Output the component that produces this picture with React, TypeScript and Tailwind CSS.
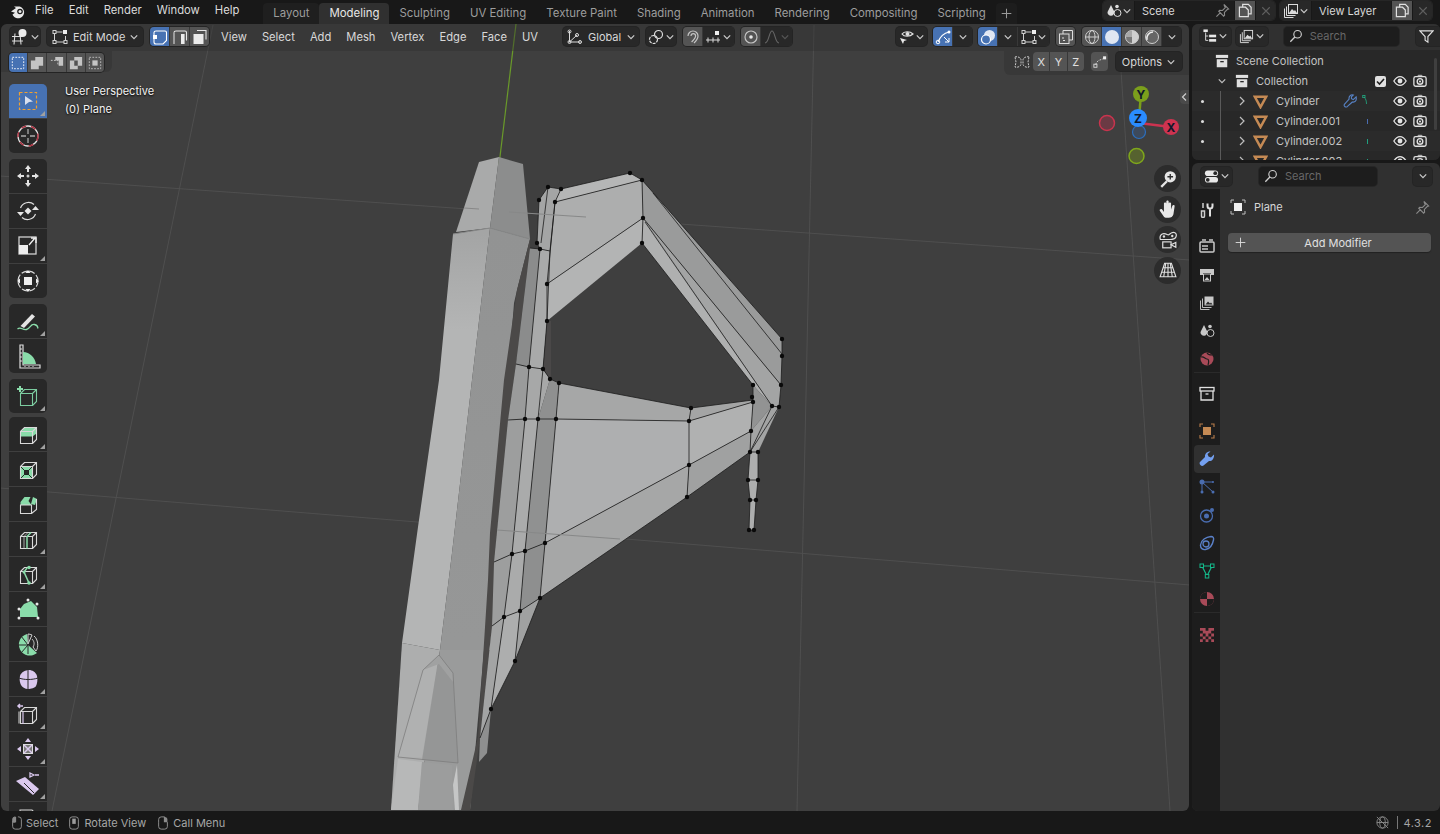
import type { ReactNode } from "react";

const S = "#d8d8d8";
const G = "#8adcaa";
const P = "#dac8ee";

const Chev = ({ c = "#c8c8c8" }: { c?: string }) => (
  <svg width="10" height="10" viewBox="0 0 10 10" className="shrink-0">
    <path d="M1.800 3.400 5 6.600l3.200-3.200" fill="none" stroke={c} strokeWidth="1.300" />
  </svg>
);

const Ico = ({ s = 16, v = 16, children }: { s?: number; v?: number; children: ReactNode }) => (
  <svg width={s} height={s} viewBox={`0 0 ${v} ${v}`} fill="none" className="shrink-0">
    {children}
  </svg>
);

const Eye = () => (
  <Ico s={14}>
    <path d="M1 8c2-3.400 4.400-5 7-5s5 1.600 7 5c-2 3.400-4.400 5-7 5S3 11.400 1 8z" stroke="#e4e4e4" strokeWidth="1.500" />
    <circle cx="8" cy="8" r="2.800" fill="#e4e4e4" />
  </Ico>
);

const Cam = () => (
  <Ico s={14}>
    <rect x="1" y="3" width="14" height="11" rx="2" stroke="#e0e0e0" strokeWidth="1.500" />
    <path d="M5 3l1-1.500h4L11 3" stroke="#e0e0e0" />
    <circle cx="8" cy="8.500" r="3.200" stroke="#e0e0e0" strokeWidth="1.600" />
    <circle cx="8" cy="8.500" r="1.200" fill="#e0e0e0" />
  </Ico>
);

const CopyIco = ({ c = "#e0e0e0" }: { c?: string }) => (
  <Ico s={15}>
    <path d="M5 4.500V1.500h6l3 3v7h-3" stroke={c} strokeWidth="1.300" />
    <path d="M1.500 4.500H8l3 3v7H1.500z" stroke={c} strokeWidth="1.300" />
  </Ico>
);

const XIco = ({ c = "#5e5e5e" }: { c?: string }) => (
  <Ico s={12}>
    <path d="M3 3l10 10M13 3L3 13" stroke={c} strokeWidth="1.500" />
  </Ico>
);

const PinIco = ({ c = "#8a8a8a" }: { c?: string }) => (
  <Ico s={15}>
    <path d="M9.500 1.500l5 5-1.500.5-3 3 .2 3-1 1-5.200-5.200 1-1 3 .2 3-3zM5.500 10.500l-4 4" stroke={c} strokeWidth="1.200" />
  </Ico>
);

const SearchIco = () => (
  <Ico s={14}>
    <circle cx="9.800" cy="6" r="4.300" stroke="#cfcfcf" strokeWidth="1.300" />
    <path d="M6.700 9.200 1.500 14.500" stroke="#cfcfcf" strokeWidth="1.500" />
  </Ico>
);

const ViewIco = () => (
  <Ico s={18} v={18}>
    <path d="M1 8.500h10M1 13h11M4 5.500l-1 11M9 5.500l1 11" stroke="#dcdcdc" strokeWidth="1.100" />
    <circle cx="11.500" cy="5" r="4" fill="#ececec" />
  </Ico>
);

const EditIco = () => (
  <Ico s={16}>
    <path d="M2.500 3h8M2.500 3v10M2.500 13h11M13.500 7v6" stroke="#cfcfcf" strokeWidth="1" />
    <rect x="1" y="1.500" width="3" height="3" fill="#2a2a2a" stroke="#cfcfcf" />
    <rect x="1" y="11.500" width="3" height="3" fill="#2a2a2a" stroke="#cfcfcf" />
    <rect x="12" y="11.500" width="3" height="3" fill="#2a2a2a" stroke="#cfcfcf" />
    <rect x="11" y="1" width="4" height="4" fill="#ececec" />
  </Ico>
);

const SelVert = () => (
  <Ico>
    <path d="M2 3.500 Q2 2 4 2h9q1.500 0 1.500 1.500v8L11 15H4q-2 0-2-2z" stroke="#fff" strokeWidth="1.100" />
    <rect x="1" y="6" width="4" height="4" fill="#fff" />
  </Ico>
);
const SelEdge = () => (
  <Ico>
    <path d="M2 3.500 Q2 2 4 2h9q1.500 0 1.500 1.500v8" stroke="#e6e6e6" strokeWidth="1.100" />
    <path d="M2 3.500V15" stroke="#e6e6e6" strokeWidth="1" />
    <rect x="9" y="5" width="3.600" height="10" fill="#ececec" />
  </Ico>
);
const SelFace = () => (
  <Ico>
    <path d="M5 1.500h9v9" stroke="#e6e6e6" strokeWidth="1.100" />
    <rect x="1.500" y="5" width="10" height="10" fill="#ececec" />
  </Ico>
);

const Btn = ({ w = 19, blue, grey, children }: { w?: number; blue?: boolean; grey?: boolean; children?: ReactNode }) => (
  <span
    className={`h-full flex items-center justify-center ${blue ? "bg-[#4772b3]" : grey ? "bg-[#545454]" : "bg-[#282828]"}`}
    style={{ width: w }}
  >
    {children}
  </span>
);

const Group = ({ children, className = "" }: { children: ReactNode; className?: string }) => (
  <div className={`h-[19px] flex items-center gap-px rounded-[4px] overflow-hidden shadow-[0_0_0_1px_#242424] ${className}`}>{children}</div>
);

const Pill = ({ w, children, className = "" }: { w: number; children: ReactNode; className?: string }) => (
  <div
    className={`h-[19px] flex items-center justify-center gap-[1px] rounded-[4px] bg-[#282828] shadow-[0_0_0_1px_#242424] text-[#d8d8d8] ${className}`}
    style={{ width: w }}
  >
    {children}
  </div>
);

const Tri = () => (
  <svg width="5" height="5" viewBox="0 0 5 5" className="absolute right-[2px] bottom-[2px]">
    <path d="M5 0v5H0z" fill="#a0a0a0" />
  </svg>
);

const Box = ({ c = S }: { c?: string }) => (
  <path d="M4.500 9.500h12v12h-12zM4.500 9.500l4-4h12v12l-4 4M16.500 9.500l4-4" stroke={c} strokeWidth="1.100" fill="none" />
);

const toolGroups: { el: ReactNode; corner?: boolean; active?: boolean }[][] = [
  [
    {
      active: true,
      corner: true,
      el: (
        <>
          <rect x="3.500" y="3.500" width="17" height="17" stroke="#f0a030" strokeWidth="1.200" strokeDasharray="3 2" />
          <path d="M9 7l8 5.500-4 .5-4 3z" fill="#d9dfee" />
        </>
      ),
    },
    {
      el: (
        <>
          <circle cx="12" cy="12" r="10" stroke="#e0e0e0" strokeWidth="1.300" />
          <circle cx="12" cy="12" r="10" stroke="#b03040" strokeWidth="1.400" strokeDasharray="5 5" />
          <path d="M12 5v5M12 14v5M5 12h5M14 12h5" stroke="#aaa" strokeWidth="1.300" />
        </>
      ),
    },
  ],
  [
    {
      el: (
        <>
          <path d="M12 1l3 4h-2v3h-2V5H9zM12 23l3-4h-2v-3h-2v3H9zM1 12l4-3v2h3v2H5v2zM23 12l-4-3v2h-3v2h3v2z" fill="#e4e4e4" />
          <circle cx="12" cy="12" r="1.500" fill="#cfcfcf" />
        </>
      ),
    },
    {
      el: (
        <>
          <path d="M4.500 9A8.500 8.500 0 0 1 18 5.500M19.500 15A8.500 8.500 0 0 1 6 18.500" stroke="#dcdcdc" strokeWidth="1.200" />
          <path d="M12 8.500l3.500 3.500-3.500 3.500L8.500 12z" fill="#e6e6e6" />
          <path d="M1 13h7l-3.500 4zM16 11h7l-3.500-4z" fill="#e6e6e6" />
        </>
      ),
    },
    {
      corner: true,
      el: (
        <>
          <rect x="3" y="3" width="17" height="17" stroke="#d0d0d0" strokeWidth="1.300" />
          <rect x="3" y="11" width="9" height="9" fill="#eee" />
          <path d="M13 11l6-7M15 4h5v5" stroke="#eee" strokeWidth="1.300" />
        </>
      ),
    },
    {
      el: (
        <>
          <circle cx="12" cy="12" r="10" stroke="#d8d8d8" strokeWidth="1.200" strokeDasharray="6 2" />
          <rect x="8" y="8" width="8" height="8" fill="#eee" />
          <path d="M12 1l2.500 3h-5zM12 23l2.500-3h-5zM1 12l3-2.500v5zM23 12l-3-2.500v5z" fill="#eee" />
        </>
      ),
    },
  ],
  [
    {
      corner: true,
      el: (
        <>
          <path d="M4.500 17L16 5l3 2.500L8 19z" fill="#e4e4e4" />
          <path d="M1.500 20c3.500-3 5 1.500 9 .5s4-6 8-5 3 3 3.500 4" stroke={G} strokeWidth="1.300" />
        </>
      ),
    },
    {
      el: (
        <>
          <path d="M4 1h3v20h17v3H4z" fill="none" stroke="#dedede" strokeWidth="1.200" />
          <path d="M7 8c7 0 12 6 13 12H7z" fill={G} />
          <path d="M4 5h2M4 9h2M4 13h2M4 17h2M9 22v1M13 22v1M17 22v1" stroke="#dedede" />
        </>
      ),
    },
  ],
  [
    {
      corner: true,
      el: (
        <>
          <path d="M6 6H0M3 3v6" stroke={G} strokeWidth="2" transform="translate(1 -1)" />
          <Box c="#7ccca0" />
        </>
      ),
    },
  ],
  [
    {
      corner: true,
      el: (
        <>
          <path d="M4.500 10.500l4-5h12v6l-4 3h-12z" fill={G} />
          <Box />
        </>
      ),
    },
    {
      el: (
        <>
          <path d="M4.500 9.500h12v12h-12z" fill={G} />
          <rect x="8.500" y="13.500" width="4" height="4" fill="#282828" stroke="#222" />
          <path d="M4.500 9.500l4 4M16.500 9.500l-4 4M4.500 21.500l4-4M16.500 21.500l-4-4" stroke="#282828" />
          <Box />
        </>
      ),
    },
    {
      el: (
        <>
          <path d="M4.500 13v-3l4-5h6l-2 4 3 4z" fill={G} />
          <path d="M17 5l4 2-2 6-4-1z" fill={G} />
          <path d="M4.500 13h11v8.500h-11zM15.500 21.500l5-4V7" stroke={S} strokeWidth="1.100" fill="none" />
        </>
      ),
    },
    {
      corner: true,
      el: (
        <>
          <Box />
          <path d="M11 21.500V9.500l4-4" stroke={G} strokeWidth="1.500" />
          <path d="M8 9.500V21M8 9.500l4-4" stroke={S} strokeWidth=".7" />
        </>
      ),
    },
    {
      corner: true,
      el: (
        <>
          <Box />
          <path d="M11 6l-3 4 5 11" stroke={G} strokeWidth="1.500" />
          <circle cx="13" cy="5.500" r="1.800" fill={G} />
          <circle cx="8" cy="10" r="1.500" fill={G} />
          <circle cx="13" cy="21" r="1.800" fill={G} />
        </>
      ),
    },
    {
      el: (
        <>
          <path d="M4 20V12L8 7l7-3 6 6 1 10z" fill={G} />
          <circle cx="12" cy="3" r="1.500" fill="#e8e8e8" />
          <circle cx="21" cy="7" r="1.500" fill="#e8e8e8" />
          <circle cx="3" cy="12" r="1.500" fill="#e8e8e8" />
          <circle cx="3" cy="21" r="1.500" fill="#e8e8e8" />
          <circle cx="22" cy="21" r="1.500" fill="#e8e8e8" />
        </>
      ),
    },
    {
      el: (
        <>
          <path d="M12 13L11 2a11 11 0 1 0 10 19z" fill={G} />
          <path d="M12 13L5 4M12 13H1M12 13l-7 8M12 13v9" stroke="#282828" />
          <path d="M12 12V2a10 10 0 0 1 4 1l-4 9zM18 4c4 3 5 11 2 15l-3-4c2-3 1-6-1-8" stroke="#cfcfcf" strokeWidth="1" />
        </>
      ),
    },
    {
      corner: true,
      el: (
        <>
          <path d="M4 9c1-4 6-6 9-6s7 2 8 6 0 8-1 10-5 3-8 3-6-2-7-4-2-6-1-9z" fill={P} />
          <path d="M3 11c5 2 13 2 19 0M12 3v19" stroke="#282828" />
        </>
      ),
    },
    {
      corner: true,
      el: (
        <>
          <path d="M1 2h5M3 0l-2 2 2 2" stroke={P} strokeWidth="1.500" transform="translate(1 2)" />
          <Box />
          <path d="M7 10v12" stroke={P} strokeWidth="1.200" />
          <path d="M2 9.500v12" stroke={S} strokeWidth="1" transform="translate(1 0)" />
        </>
      ),
    },
    {
      corner: true,
      el: (
        <>
          <rect x="7.500" y="7.500" width="9" height="9" fill="#7a7a7a" stroke="#ddd" />
          <path d="M12 1l3 4H9zM12 23l3-4H9zM1 12l4-3v6zM23 12l-4-3v6z" fill={P} />
          <path d="M8 8l8 8M16 8l-8 8" stroke={P} strokeWidth="1.500" />
        </>
      ),
    },
    {
      corner: true,
      el: (
        <>
          <path d="M0 9l9-4 14 12-6 6z" fill={P} />
          <path d="M8 11l10 10" stroke="#282828" />
          <path d="M18 3l-4-2v4zM19 3h4" stroke={P} strokeWidth="1.300" />
        </>
      ),
    },
    { el: <path d="M4 24V3h12l4 4v17" stroke={S} strokeWidth="1.100" /> },
  ],
];

const Tool = ({ el, corner, active }: { el: ReactNode; corner?: boolean; active?: boolean }) => (
  <div className={`relative w-[38px] h-[34px] shrink-0 flex items-center justify-center ${active ? "bg-[#4772b3]" : "bg-[#282828]"}`}>
    <svg width="24" height="24" viewBox="0 0 24 24" fill="none" className="overflow-visible">
      {el}
    </svg>
    {corner && <Tri />}
  </div>
);

const tris: [string, string][] = [
  ["fill-[#9d9e9e]", "508,420 525,419 512,554 494,562"],
  ["fill-[#aaabab]", "525,419 538,419 525,551 512,554"],
  ["fill-[#909191]", "538,419 556,419 545,543 525,551"],
  ["fill-[#9d9e9e]", "494,562 512,554 504,617 492,626"],
  ["fill-[#aaabab]", "512,554 525,551 520,611 504,617"],
  ["fill-[#8e8f8f]", "525,551 545,543 540,598 520,611"],
  ["fill-[#a3a4a4]", "492,626 504,617 491,709 480,738"],
  ["fill-[#adaeae]", "504,617 520,611 515,661 491,709"],
  ["fill-[#a0a1a1]", "520,611 540,598 515,661"],
  ["fill-[#8e8f8f]", "480,738 491,709 487,753 479,762"],
  // wing
  ["fill-[#a6a7a7]", "559,383 691,408 689,421 556,419"],
  ["fill-[#aeafb0]", "556,419 689,421 689,465 545,543"],
  ["fill-[#a6a7a7]", "545,543 689,465 687,497 540,598"],
  ["fill-[#a4a5a5]", "691,408 753,400 753,402 689,421"],
  ["fill-[#b0b1b1]", "689,421 753,402 751,431 689,465"],
  ["fill-[#a0a1a1]", "689,465 751,431 750,452 687,497"],
  // inner strips
  ["fill-[#9a9b9b]", "516,364 529,367 525,419 508,420"],
  ["fill-[#a7a8a8]", "529,367 543,369 550,379 538,419 525,419"],
  ["fill-[#8f9090]", "550,379 559,383 556,419 538,419"],
  ["fill-[#8b8c8c]", "530,248 540,249 529,367 516,364"],
  ["fill-[#a9aaaa]", "540,249 550,251 547,321 543,369 529,367"],
  ["fill-[#4a4848]", "547,321 551,321 551,380 543,369"],
  ["fill-[#a4a5a5]", "548,187 561,189 555,202 550,251 540,249 537,243 539,200"],
  // top panel
  ["fill-[#b5b6b6]", "561,189 630,173 642,180 555,202"],
  ["fill-[#adaeae]", "555,202 642,180 643,218 547,284"],
  ["fill-[#b3b4b4]", "547,284 643,218 642,243 547,321"],
  ["fill-[#a9aaaa]", "555,202 547,284 547,321 550,251"],
  // arm
  ["fill-[#9a9b9b]", "642,180 782,339 782,356 781,385 643,218"],
  ["fill-[#a3a4a4]", "643,218 781,385 779,407 772,406"],
  ["fill-[#afb0b0]", "643,218 772,406 753,385 642,243"],
  // arm end
  ["fill-[#929393]", "753,385 772,406 751,431 753,402"],
  ["fill-[#a3a4a4]", "772,406 779,407 758,452 750,452 751,431"],
  ["fill-[#adaeae]", "750,452 758,452 758,480 756,500 754,530 749,530 750,500 748,480"],
];

const wires = [
  "555,202 642,180",
  "642,180 643,218 642,243",
  "643,218 547,284",
  "555,202 547,284 547,321",
  "561,189 630,173 642,180 782,339 782,356 781,385 779,407 772,406",
  "653,193 782,354",
  "643,218 781,385",
  "645,222 772,406",
  "642,243 753,385",
  "548,187 561,189 555,202 550,251",
  "548,187 539,200 537,243 540,249",
  "548,187 541,243",
  "530,248 540,249 550,251",
  "540,249 529,367 525,419 512,554 504,617 491,709 480,738",
  "550,251 547,321 543,369 550,379 559,383",
  "516,364 529,367 543,369",
  "543,369 538,419 525,551 520,611 515,661 491,709",
  "559,383 691,408 753,400",
  "559,383 556,419 545,543 540,598 515,661",
  "508,420 525,419 538,419 556,419 689,421 753,402",
  "691,408 689,421 689,465 687,497",
  "494,562 512,554 525,551 545,543 689,465 751,431",
  "492,626 504,617 520,611 540,598 687,497 750,452",
  "753,385 753,402 751,431 750,452 772,406",
  "750,452 779,407",
  "750,452 758,452 758,480 756,500 754,530 749,530 750,500 748,480 750,452",
  "748,480 758,480",
  "750,500 756,500",
];

const verts = [
  [548, 187], [561, 189], [555, 202], [539, 200], [537, 243], [540, 249], [630, 173], [642, 180], [643, 218], [642, 243],
  [547, 284], [547, 321], [782, 339], [782, 356], [781, 385], [779, 407], [772, 406], [753, 385], [752, 397], [753, 402],
  [691, 408], [689, 421], [559, 383], [550, 379], [543, 369], [529, 367], [525, 419], [538, 419], [556, 419], [689, 465],
  [687, 497], [751, 431], [750, 452], [758, 452], [748, 480], [758, 480], [750, 500], [756, 500], [749, 530], [754, 530],
  [545, 543], [525, 551], [512, 554], [540, 598], [520, 611], [504, 617], [515, 661], [491, 709],
];

const Mesh = () => (
  <svg width="1440" height="834" viewBox="0 0 1440 834" className="absolute left-[-1px] top-[-24px]">
    <defs>
      <linearGradient id="colL" gradientUnits="userSpaceOnUse" x1="0" y1="234" x2="0" y2="330">
        <stop offset="0" stopColor="#a4a5a5" />
        <stop offset="1" stopColor="#b4b5b5" />
      </linearGradient>
      <linearGradient id="colR" gradientUnits="userSpaceOnUse" x1="0" y1="234" x2="0" y2="640">
        <stop offset="0" stopColor="#929393" />
        <stop offset="1" stopColor="#969797" />
      </linearGradient>
    </defs>
    <g stroke="#4f4f4f" strokeWidth="1" fill="none">
      <path d="M213 25 52 811M0 176l1190 84M0 488l1190 97M814 25l-17 786M1118 25l52 786" />
    </g>
    <path d="M516 24 499 165" stroke="#6a9a2a" strokeWidth="1.200" />
    {/* column */}
    <polygon points="479,162 499,157 490,228 456,232" className="fill-[#a9aaaa]" />
    <polygon points="499,157 523,164 530,239 490,228" className="fill-[#8c8d8d]" />
    <polygon points="453,234 490,228 472,380 452,553 440,650 402,643 418,527 439,380" fill="url(#colL)" />
    <polygon points="490,228 530,239 517,290 514,303 508,380 493,533 490,650 440,650 452,553 472,380" fill="url(#colR)" />
    <polygon points="402,643 440,650 418,810 391,810" className="fill-[#adaeae]" />
    <polygon points="440,650 484,650 470,810 418,810" className="fill-[#9a9b9b]" />
    <path d="M453,234 490,228 530,239" stroke="#868787" strokeWidth="1.200" fill="none" />
    {/* spike */}
    <polygon points="439,655 422,757 398,757 423,670" className="fill-[#b0b1b1]" />
    <polygon points="439,655 453,673 458,763 422,760" className="fill-[#959696]" />
    <polygon points="423,670 439,664 453,682 453,673 439,655" className="fill-[#a0a1a1]" />
    <polygon points="398,759 422,762 418,810 391,810" className="fill-[#b7b8b8]" />
    <polygon points="422,762 452,765 453,810 418,810" className="fill-[#9c9d9d]" />
    <path d="M398,757 423,670 439,655 453,673 458,763 398,757" stroke="#7e7e7e" strokeWidth=".8" fill="none" />
    <polygon points="453,785 457,765 459,810 455,810" className="fill-[#c5c6c6]" />
    {/* dark gap */}
    <polygon points="530,239 530,248 516,364 508,420 494,562 492,626 480,738 470,810 461,810 478,737 488,580 490,533 504,380 517,290" className="fill-[#4b4948]" />
    {tris.map(([c, p], i) => (
      <polygon key={i} points={p} className={c} />
    ))}
    {wires.map((p, i) => (
      <polyline key={i} points={p} fill="none" stroke="#1c1c1c" strokeWidth=".8" />
    ))}
    {verts.map(([x, y], i) => (
      <circle key={i} cx={x} cy={y} r="2.200" fill="#0a0a0a" />
    ))}
    <path d="M464 208l15 1M509 212l77 5M497 530l123 9" stroke="#878888" strokeWidth="1" />
    {/* gizmo */}
    <path d="M1139 118l2-24" stroke="#7a9e1a" strokeWidth="2.500" />
    <path d="M1139 123l32 4" stroke="#cc3350" strokeWidth="2.500" />
    <circle cx="1107" cy="123" r="7.500" fill="#6b3a44" stroke="#c9344e" strokeWidth="1.500" />
    <circle cx="1136.500" cy="156" r="7.500" fill="#56622f" stroke="#7fa71b" strokeWidth="1.500" />
    <circle cx="1139" cy="132" r="6.500" fill="#3d4a5c" stroke="#2c6fbe" strokeWidth="1.200" />
    <circle cx="1141" cy="94" r="8" fill="#7b9f1c" />
    <circle cx="1171" cy="127" r="8" fill="#ce3350" />
    <circle cx="1138" cy="118" r="9" fill="#2a8cff" />
    <g fontFamily="Inter, sans-serif" fontSize="12" fontWeight="700" fill="#10182a" textAnchor="middle">
      <text x="1141" y="98.500">Y</text>
      <text x="1171" y="131.500">X</text>
      <text x="1138" y="122.500">Z</text>
    </g>
  </svg>
);

const NavBtn = ({ children }: { children: ReactNode }) => (
  <div className="w-[27px] h-[27px] rounded-full bg-[#2c2c2c] flex items-center justify-center">{children}</div>
);

const Row = ({ name, dark, wrench, tip }: { name: string; dark?: boolean; wrench?: boolean; tip?: string }) => (
  <div className={`relative h-[20px] shrink-0 flex items-center ${dark ? "bg-[#2b2b2b]" : "bg-[#282828]"}`}>
    <span className="absolute left-[9px] w-[3px] h-[3px] rounded-full bg-[#dcdcdc]" />
    <span className="absolute left-[28px] top-0 bottom-0 w-px bg-[#5a5a5a]" />
    <span className="ml-[45px]">
      <svg width="10" height="10" viewBox="0 0 10 10">
        <path d="M3 1l4 4-4 4" fill="none" stroke="#bdbdbd" strokeWidth="1.200" />
      </svg>
    </span>
    <span className="ml-[6px]">
      <Ico s={15}>
        <path d="M2 3h12L8 14z" fill="none" stroke="#c58a54" strokeWidth="2.600" />
      </Ico>
    </span>
    <span className="ml-[8px] text-[#c4c4c4]">{name}</span>
    {wrench ? (
      <>
        <span className="absolute left-[151px]">
          <Ico s={15}>
            <path d="M14 3l-3 3-2-1V3l2-2c-3-1-5 2-4.500 4.500L1.500 11c-1 2 1 3.500 3 2.500L10 8.500c2.500.5 5-1 4-5.500z" stroke="#5680c2" strokeWidth="1.200" />
          </Ico>
        </span>
        <span className="absolute left-[170px]">
          <Ico s={12}>
            <rect x="1" y="0.500" width="3" height="3" stroke="#20b58a" />
            <path d="M3 3c2 2 3 5 3 9" stroke="#20b58a" />
          </Ico>
        </span>
      </>
    ) : (
      <span className="absolute left-[175px] w-[2px] h-[5px] border-l" style={{ borderColor: tip }} />
    )}
    <span className="absolute left-[201px]"><Eye /></span>
    <span className="absolute left-[221px]"><Cam /></span>
  </div>
);

const CollIco = ({ c = "#e0e0e0" }: { c?: string }) => (
  <Ico s={14}>
    <rect x="1" y="1" width="14" height="3.500" fill={c} />
    <path d="M2 6h12v9H2z" fill={c} />
    <rect x="6" y="8" width="4" height="1.500" fill="#282828" />
  </Ico>
);

const tabs = ["Layout", "Modeling", "Sculpting", "UV Editing", "Texture Paint", "Shading", "Animation", "Rendering", "Compositing", "Scripting"];

const PropTab = ({ children, active, top, sep }: { children: ReactNode; active?: boolean; top: number; sep?: boolean }) => (
  <div
    className={`w-[26px] flex items-center justify-center shrink-0 ${active ? "bg-[#303030] rounded-l-[4px]" : ""} ${sep ? "border-b border-[#2a2a2a]" : ""}`}
    style={{ height: 28, marginTop: top }}
  >
    {children}
  </div>
);

export default function App() {
  return (
    <div className="w-[1440px] h-[834px] bg-[#181818] flex flex-col overflow-hidden text-[11px] leading-[16px] whitespace-nowrap text-[#d8d8d8] font-['Inter',sans-serif]">
      {/* top bar */}
      <div className="h-[24px] shrink-0 flex items-start">
        <div className="w-[35px] h-[20px] flex items-center justify-center pl-[1px]">
          <Ico s={17} v={17}>
            <path d="M1 9.500 6 6 4 4.500h5.500a6 6 0 1 1-7 8l2.500-1.800" fill="#e8e8e8" />
            <circle cx="10" cy="9.500" r="2.800" fill="#181818" />
            <circle cx="10" cy="9.500" r="1.500" fill="#e8e8e8" />
          </Ico>
        </div>
        <div className="h-[20px] flex items-center gap-[15px] text-[11.250px] text-[#dcdcdc]">
          <span>File</span>
          <span>Edit</span>
          <span>Render</span>
          <span>Window</span>
          <span>Help</span>
        </div>
        <div className="ml-[24px] mt-[3px] h-[21px] flex items-center text-[11.400px] text-[#9d9d9d]">
          {tabs.map((t) => (
            <div
              key={t}
              className={`h-full px-[10px] pb-[1px] flex items-center rounded-t-[4px] ${t === "Modeling" ? "bg-[#303030] text-[#e6e6e6]" : t === "Layout" ? "bg-[#1f1f1f]" : ""}`}
            >
              {t}
            </div>
          ))}
          <div className="h-full w-[21px] flex items-center justify-center bg-[#1d1d1d] rounded-t-[4px]">
            <Ico s={11}>
              <path d="M8 1v14M1 8h14" stroke="#999" strokeWidth="1.500" />
            </Ico>
          </div>
        </div>
        <div className="ml-auto pr-[8px] h-[19px] mt-px flex items-center gap-[5px]">
          <div className="h-full flex items-center rounded-[4px] overflow-hidden gap-px bg-[#181818] shadow-[0_0_0_1px_#262626]">
            <Btn w={31}>
              <Ico>
                <path d="M5 2l3 6a3.400 3.400 0 1 1-6.500 1z" fill="#dcdcdc" />
                <circle cx="11.500" cy="10" r="3.500" stroke="#dcdcdc" />
                <circle cx="11" cy="3.500" r="1.800" fill="#dcdcdc" />
              </Ico>
              <Chev />
            </Btn>
            <div className="w-[99px] h-full bg-[#1d1d1d] flex items-center justify-between pl-[7px] pr-[4px]">
              <span>Scene</span>
              <PinIco />
            </div>
            <Btn w={20} grey><CopyIco /></Btn>
            <Btn w={19}><XIco /></Btn>
          </div>
          <div className="h-full flex items-center rounded-[4px] overflow-hidden gap-px bg-[#181818] shadow-[0_0_0_1px_#262626]">
            <Btn w={31}>
              <Ico>
                <path d="M1.500 5.500v9h9M3.500 3.500v9h9" stroke="#dcdcdc" />
                <rect x="5.500" y="1.500" width="9" height="9" stroke="#dcdcdc" />
                <path d="M6 10l3-4 2 2 1-1 2 3z" fill="#dcdcdc" />
              </Ico>
              <Chev />
            </Btn>
            <div className="w-[79px] h-full bg-[#1d1d1d] flex items-center pl-[7px]">View Layer</div>
            <Btn w={20} grey><CopyIco /></Btn>
            <Btn w={19}><XIco /></Btn>
          </div>
        </div>
      </div>

      {/* main */}
      <div className="flex-1 min-h-0 flex pl-px gap-[3px]">
        {/* viewport */}
        <div className="relative w-[1188px] h-full bg-[#3f3f3f] rounded-[6px] overflow-hidden">
          <Mesh />
          <div className="relative">
            {/* header */}
            <div className="h-[27px] pb-[2px] pl-[9px] pr-[8px] flex items-center bg-[#2f2f2f]/40">
              <Pill w={30}><ViewIco /><Chev /></Pill>
              <Pill w={96} className="ml-[7px] !justify-start pl-[5px]">
                <EditIco />
                <span className="ml-[4px] mr-auto">Edit Mode</span>
                <span className="mr-[4px]"><Chev /></span>
              </Pill>
              <Group className="ml-[7px]">
                <Btn blue><SelVert /></Btn>
                <Btn grey><SelEdge /></Btn>
                <Btn grey><SelFace /></Btn>
              </Group>
              <div className="ml-[12px] flex gap-[15px] text-[11.200px]">
                <span>View</span>
                <span>Select</span>
                <span>Add</span>
                <span>Mesh</span>
                <span>Vertex</span>
                <span>Edge</span>
                <span>Face</span>
                <span>UV</span>
              </div>
              <Pill w={76} className="ml-[25px] !justify-start pl-[3px]">
                <Ico>
                  <path d="M3.500 2v11h11M3.500 13L11 6" stroke="#dcdcdc" />
                  <circle cx="3.500" cy="2.500" r="1.500" stroke="#dcdcdc" />
                  <circle cx="3.500" cy="13" r="1.500" stroke="#dcdcdc" />
                  <circle cx="14" cy="13" r="1.500" stroke="#dcdcdc" />
                  <circle cx="11" cy="6" r="1.500" stroke="#dcdcdc" />
                </Ico>
                <span className="ml-[5px] mr-auto">Global</span>
                <span className="mr-[3px]"><Chev /></span>
              </Pill>
              <Pill w={30} className="ml-[7px]">
                <Ico>
                  <circle cx="5.500" cy="10.500" r="4" stroke="#dcdcdc" strokeWidth="1.200" strokeDasharray="3 1" />
                  <circle cx="10.500" cy="5.500" r="4" stroke="#dcdcdc" strokeWidth="1.200" />
                </Ico>
                <Chev />
              </Pill>
              <Group className="ml-[7px]">
                <Btn grey>
                  <Ico>
                    <path d="M3 7a5 5 0 0 1 10 0c0 3-2 5-4 7M6 7a2.300 2.300 0 0 1 4.600 0c0 2-2 4-4 6" stroke="#c4c4c4" strokeWidth="1.200" />
                  </Ico>
                </Btn>
                <Btn w={31}>
                  <Ico>
                    <path d="M0 11h14M2 8.500v5M7 8.500v5M12 8.500v5" stroke="#d8d8d8" />
                    <rect x="9" y="2" width="4" height="4" fill="#eee" />
                  </Ico>
                  <Chev />
                </Btn>
              </Group>
              <Group className="ml-[7px]">
                <Btn grey>
                  <Ico>
                    <circle cx="8" cy="8" r="6" stroke="#c4c4c4" strokeWidth="1.200" />
                    <circle cx="8" cy="8" r="1.800" fill="#e8e8e8" />
                  </Ico>
                </Btn>
                <Btn w={31}>
                  <Ico>
                    <path d="M1 14c4 0 4-12 7-12s3 12 7 12" stroke="#666" strokeWidth="1.100" />
                  </Ico>
                  <Chev c="#555" />
                </Btn>
              </Group>
              <div className="ml-auto flex items-center">
                <Pill w={31}>
                  <Ico>
                    <path d="M4 5c2-3 8-3 11 0-3 3-9 3-11 0z" stroke="#e0e0e0" strokeWidth="1.200" />
                    <circle cx="9.500" cy="5" r="2" fill="#e0e0e0" />
                    <path d="M2 9l7 2-3 1-1 3z" fill="#e8e8e8" />
                  </Ico>
                  <Chev />
                </Pill>
                <Group className="ml-[6px]">
                  <Btn blue>
                    <Ico>
                      <path d="M3 13C5 8 9 4 14 3" stroke="#fff" strokeWidth="1.100" />
                      <circle cx="3" cy="13" r="1.800" stroke="#fff" />
                      <circle cx="14" cy="3" r="1.500" fill="#fff" />
                      <path d="M9 8l5 5M14 9v4h-4" stroke="#fff" />
                    </Ico>
                  </Btn>
                  <Btn><Chev /></Btn>
                </Group>
                <Group className="ml-[6px]">
                  <Btn blue>
                    <Ico>
                      <circle cx="9.500" cy="6.500" r="5.500" fill="#e0e6f2" />
                      <circle cx="6" cy="10.500" r="4.500" stroke="#fff" strokeWidth="1.200" fill="#4772b3" />
                    </Ico>
                  </Btn>
                  <Btn><Chev /></Btn>
                  <Btn w={31}>
                    <EditIco />
                    <Chev />
                  </Btn>
                </Group>
                <Group className="ml-[7px]">
                  <Btn grey>
                    <Ico>
                      <path d="M5 5V1.500h9.500V11H11" stroke="#dedede" />
                      <rect x="1.500" y="5" width="9.500" height="9.500" stroke="#dedede" />
                      <path d="M5 8v2M5 11.500h2" stroke="#dedede" />
                    </Ico>
                  </Btn>
                </Group>
                <Group className="ml-[7px]">
                  <Btn grey>
                    <Ico>
                      <circle cx="8" cy="8" r="6.500" stroke="#cfcfcf" />
                      <ellipse cx="8" cy="8" rx="3" ry="6.500" stroke="#cfcfcf" />
                      <path d="M1.500 8h13" stroke="#cfcfcf" />
                    </Ico>
                  </Btn>
                  <Btn blue>
                    <Ico><circle cx="8" cy="8" r="7" fill="#dfe6f2" /></Ico>
                  </Btn>
                  <Btn grey>
                    <Ico>
                      <circle cx="8" cy="8" r="6.500" stroke="#cfcfcf" fill="#777" />
                      <path d="M8 1.500a6.500 6.500 0 0 1 0 13z" fill="#cfcfcf" />
                      <path d="M1.500 8H8V1.500a6.500 6.500 0 0 0-6.500 6.500z" fill="#a8a8a8" />
                    </Ico>
                  </Btn>
                  <Btn grey>
                    <Ico>
                      <circle cx="8" cy="8" r="6.500" stroke="#cfcfcf" fill="#666" />
                      <path d="M3 11C2 7 5 3 9 3" stroke="#eee" strokeWidth="1.500" />
                    </Ico>
                  </Btn>
                  <Btn><Chev /></Btn>
                </Group>
              </div>
            </div>

            {/* tool settings */}
            <div className="h-[24px] flex items-start justify-between">
              <div className="h-[21px] w-[111px] bg-[#2f2f2f]/40 rounded-br-[6px] pl-[8px] pt-[2px]">
                <Group className="w-[95px]">
                  <Btn blue>
                    <Ico s={14}><rect x="1.500" y="1.500" width="13" height="13" stroke="#fff" strokeDasharray="2 1.500" /></Ico>
                  </Btn>
                  <Btn grey>
                    <Ico s={14}><path d="M1 5h5V1h9v10h-5v4H1z" fill="#c4c4c4" /></Ico>
                  </Btn>
                  <Btn grey>
                    <Ico s={14}><path d="M1 5h8v5h5" stroke="#cfcfcf" strokeDasharray="2 1.500" /><path d="M6 1h9v10h-5V5H6z" fill="#c4c4c4" /></Ico>
                  </Btn>
                  <Btn grey>
                    <Ico s={14}><path d="M1 5h5V1h9v10h-5v4H1zM6 5v6h4V5z" fill="#c4c4c4" fillRule="evenodd" /></Ico>
                  </Btn>
                  <Btn grey>
                    <Ico s={14}><rect x="1.500" y="1.500" width="13" height="13" stroke="#c4c4c4" strokeDasharray="2 1.500" /><rect x="5" y="5" width="6" height="6" fill="#c4c4c4" /></Ico>
                  </Btn>
                </Group>
              </div>
              <div className="h-[24px] w-[185px] bg-[#2f2f2f]/40 rounded-bl-[6px] pt-px flex items-start">
                <span className="ml-[10px] mt-[2px]">
                  <Ico>
                    <path d="M1 3c3-1 6 1 6 3v4c0 2-3 4-6 3l1-5zM15 3c-3-1-6 1-6 3v4c0 2 3 4 6 3l-1-5z" stroke="#c8c8c8" strokeDasharray="2 1" />
                  </Ico>
                </span>
                <div className="ml-[3px] h-[19px] w-[51px] flex gap-px rounded-[4px] overflow-hidden text-[#e0e0e0]">
                  <span className="w-[17px] bg-[#545454] flex items-center justify-center">X</span>
                  <span className="w-[17px] bg-[#545454] flex items-center justify-center">Y</span>
                  <span className="w-[17px] bg-[#545454] flex items-center justify-center">Z</span>
                </div>
                <div className="ml-[7px] h-[19px] w-[17px] rounded-[4px] bg-[#545454] flex items-center justify-center">
                  <Ico s={14}>
                    <path d="M3 11C5 5 9 6 12 4" stroke="#ddd" strokeDasharray="2 1.500" />
                    <rect x="1" y="10.500" width="3.500" height="3.500" stroke="#ddd" />
                    <rect x="11.500" y="1.500" width="3.500" height="3.500" fill="#eee" />
                  </Ico>
                </div>
                <Pill w={66} className="ml-[8px]">
                  <span>Options</span>
                  <span className="ml-[3px]"><Chev /></span>
                </Pill>
              </div>
            </div>

            {/* tools */}
            <div className="pt-[7px] pl-[8px] flex items-start">
              <div className="mt-[2px] flex flex-col gap-[6px] shrink-0">
                {toolGroups.map((g, i) => (
                  <div key={i} className={`flex flex-col gap-px rounded-[5px] overflow-hidden ${i === 4 ? "-mt-[2px]" : ""}`}>
                    {g.map((t, j) => (
                      <Tool key={j} {...t} />
                    ))}
                  </div>
                ))}
              </div>
              <div className="ml-[18px] text-[#f2f2f2] leading-[18px] [text-shadow:0_1px_2px_#000]">
                <div>User Perspective</div>
                <div>(0) Plane</div>
              </div>
            </div>
          </div>

          {/* collapse arrow */}
          <div className="absolute right-0 top-[66px] w-[9px] h-[14px] rounded-l-[4px] bg-[#4a4a4a] flex items-center justify-center">
            <svg width="7" height="10" viewBox="0 0 7 10">
              <path d="M5 1.500 1.500 5 5 8.500" fill="none" stroke="#cfcfcf" strokeWidth="1.200" />
            </svg>
          </div>

          {/* nav gizmo */}
          <div className="absolute left-[1153px] top-[141px] flex flex-col gap-[3.500px]">
            <NavBtn>
              <Ico s={18}>
                <circle cx="10" cy="6" r="5" fill="#e6e6e6" />
                <path d="M7 10l-5 5" stroke="#e6e6e6" strokeWidth="2" />
                <path d="M10 3.500v5M7.500 6h5" stroke="#2c2c2c" strokeWidth="1.200" />
              </Ico>
            </NavBtn>
            <NavBtn>
              <Ico s={19}>
                <path d="M5 14 1.500 9c-.5-1 1-2 2-1L5 10V3c0-1.300 2-1.300 2 0v4-5.500c0-1.300 2-1.300 2 0V7V3c0-1.300 2-1.300 2 0v5l1-3c.5-1.300 2.200-1 2 .3L13 12c-.5 2-2 3-4 3S6 15 5 14z" fill="#e8e8e8" />
              </Ico>
            </NavBtn>
            <NavBtn>
              <Ico s={19}>
                <path d="M2 8c-1-3 1-5 3-5 2.500 0 3 1.500 4 1s2-2 4-2 3 2 2 4-3 2-5 2H4z" stroke="#dedede" />
                <circle cx="5" cy="5.500" r="1" fill="#dedede" />
                <circle cx="12" cy="5" r="1" fill="#dedede" />
                <rect x="4" y="10" width="7" height="5" stroke="#dedede" />
                <path d="M11 12.500l4-2v4z" stroke="#dedede" />
              </Ico>
            </NavBtn>
            <NavBtn>
              <Ico s={18}>
                <path d="M5 2h6l4 12H1zM8 2v12M3.800 6h8.400M2.600 10h10.800M6 2l-1.800 12M10 2l1.800 12" stroke="#e0e0e0" strokeWidth="1" />
              </Ico>
            </NavBtn>
          </div>
        </div>

        {/* right column */}
        <div className="flex-1 flex flex-col gap-[3px] min-w-0">
          {/* outliner */}
          <div className="relative h-[136px] shrink-0 bg-[#282828] rounded-[6px] overflow-hidden flex flex-col">
            <div className="h-[26px] shrink-0 pb-[2px] bg-[#303030] flex items-center pl-[8px]">
              <Pill w={32}>
                <Ico s={14}>
                  <rect x="0.500" y="0.500" width="5" height="3" fill="#e8e8e8" />
                  <path d="M3 4v9h3M3 8h3" stroke="#e8e8e8" />
                  <rect x="7" y="6.500" width="8" height="3" fill="#e8e8e8" />
                  <rect x="7" y="11.500" width="8" height="3" fill="#e8e8e8" />
                </Ico>
                <Chev />
              </Pill>
              <Pill w={32} className="ml-[5px]">
                <Ico s={15}>
                  <path d="M1.500 5.500v9h9M3.500 3.500v9h9" stroke="#dcdcdc" />
                  <rect x="5.500" y="1.500" width="9" height="9" stroke="#dcdcdc" />
                  <path d="M6 10l3-4 2 2 1-1 2 3z" fill="#dcdcdc" />
                </Ico>
                <Chev />
              </Pill>
              <div className="ml-[16px] w-[118px] h-[19px] rounded-[4px] bg-[#1d1d1d] flex items-center pl-[5px] gap-[7px] text-[#686868] shadow-[0_0_0_1px_#262626]">
                <SearchIco />
                <span>Search</span>
              </div>
              <div className="ml-[17px] w-[24px] h-[19px] rounded-l-[4px] bg-[#282828] flex items-center pl-[3px] shadow-[0_0_0_1px_#242424]">
                <Ico s={15}>
                  <path d="M1 2h14L9.500 8v6l-3-2V8z" stroke="#e0e0e0" strokeWidth="1.200" />
                </Ico>
              </div>
            </div>
            <div className="h-[20px] shrink-0 flex items-center pl-[23px] bg-[#282828] mt-px">
              <CollIco />
              <span className="ml-[7px] text-[#c4c4c4]">Scene Collection</span>
            </div>
            <div className="relative h-[20px] shrink-0 flex items-center pl-[25px] bg-[#282828]">
              <Chev c="#bdbdbd" />
              <span className="ml-[8px]"><CollIco /></span>
              <span className="ml-[7px] text-[#c4c4c4]">Collection</span>
              <span className="absolute left-[183px] w-[11px] h-[11px] rounded-[2px] bg-[#e0e0e0] flex items-center justify-center">
                <svg width="9" height="9" viewBox="0 0 9 9">
                  <path d="M1 4.500l2.500 2.500L8 2" fill="none" stroke="#202020" strokeWidth="1.600" />
                </svg>
              </span>
              <span className="absolute left-[201px]"><Eye /></span>
              <span className="absolute left-[221px]"><Cam /></span>
            </div>
            <Row name="Cylinder" dark wrench />
            <Row name="Cylinder.001" tip="#4a6db0" />
            <Row name="Cylinder.002" dark tip="#20a080" />
            <Row name="Cylinder.003" tip="#20a080" />
            <span className="absolute left-[242px] top-[34px] w-[3px] h-[72px] rounded-full bg-[#3f3f3f]" />
          </div>

          {/* properties */}
          <div className="flex-1 min-h-0 bg-[#303030] rounded-[6px] overflow-hidden flex flex-col">
            <div className="h-[26px] shrink-0 flex items-center pl-[9px] pr-[8px]">
              <Pill w={31}>
                <Ico s={15}>
                  <rect x="1" y="1.500" width="14" height="6" rx="3" fill="#e8e8e8" />
                  <circle cx="12" cy="4.500" r="2" fill="#282828" />
                  <rect x="1" y="8.500" width="14" height="6" rx="3" fill="#e8e8e8" />
                  <circle cx="4" cy="11.500" r="2" fill="#282828" />
                </Ico>
                <Chev />
              </Pill>
              <div className="ml-[27px] w-[118px] h-[19px] rounded-[4px] bg-[#1d1d1d] flex items-center pl-[5px] gap-[7px] text-[#686868] shadow-[0_0_0_1px_#262626]">
                <SearchIco />
                <span>Search</span>
              </div>
              <div className="ml-auto"><Pill w={19}><Chev /></Pill></div>
            </div>
            <div className="flex-1 min-h-0 flex">
              <div className="w-[28px] pl-[2px] bg-[#1d1d1d] flex flex-col overflow-hidden">
                <PropTab top={7}>
                  <Ico>
                    <path d="M4 1v5M2.500 9h3v5a1.500 1.500 0 0 1-3 0z" stroke="#cfcfcf" strokeWidth="1.500" />
                    <path d="M11 7v7.500M8.500 1.500V4a2.500 2.500 0 0 0 5 0V1.500" stroke="#e0e0e0" strokeWidth="2" />
                  </Ico>
                </PropTab>
                <PropTab top={8}>
                  <Ico>
                    <rect x="1" y="4" width="14" height="10" rx="1" stroke="#c8c8c8" strokeWidth="1.500" />
                    <path d="M3 2h4M10 2h4M3 8h6M3 11h6" stroke="#c8c8c8" strokeWidth="1.500" />
                  </Ico>
                </PropTab>
                <PropTab top={1}>
                  <Ico>
                    <path d="M1 2h14v6h-3V6H4v2H1z" fill="#c8c8c8" />
                    <rect x="4.500" y="7" width="7" height="7" stroke="#c8c8c8" />
                    <path d="M5.500 13l2.500-3 2.500 3z" fill="#c8c8c8" />
                  </Ico>
                </PropTab>
                <PropTab top={0}>
                  <Ico>
                    <path d="M1.500 5.500v9h9M3.500 3.500v9h9" stroke="#bcbcbc" />
                    <rect x="5.500" y="1.500" width="9" height="9" fill="#c8c8c8" />
                    <path d="M6.500 9.500l2.500-3 2 2 1-1 1.500 2z" fill="#282828" />
                  </Ico>
                </PropTab>
                <PropTab top={0}>
                  <Ico>
                    <path d="M5 2l3 6a3.400 3.400 0 1 1-6.500 1z" fill="#c8c8c8" />
                    <circle cx="11.500" cy="10" r="3.500" stroke="#c8c8c8" />
                    <circle cx="11" cy="3.500" r="1.800" fill="#c8c8c8" />
                  </Ico>
                </PropTab>
                <PropTab top={0} sep>
                  <Ico>
                    <circle cx="8" cy="8" r="6.500" fill="#a84a58" />
                    <path d="M2 6c3-1 4 2 6 2s2 3 1 6M8 2c1 2 4 2 5 2" stroke="#1d1d1d" strokeWidth="1.200" />
                  </Ico>
                </PropTab>
                <PropTab top={7}>
                  <Ico>
                    <rect x="1" y="1.500" width="14" height="3.500" stroke="#e0e0e0" strokeWidth="1.300" />
                    <path d="M2 5v9h12V5" stroke="#e0e0e0" strokeWidth="1.300" />
                    <path d="M6.500 8h3" stroke="#e0e0e0" strokeWidth="1.300" />
                  </Ico>
                </PropTab>
                <PropTab top={9}>
                  <Ico>
                    <rect x="4" y="4" width="8" height="8" fill="#c58a54" />
                    <path d="M1 4V1h3M12 1h3v3M15 12v3h-3M4 15H1v-3" stroke="#b87d4a" strokeWidth="1.100" />
                  </Ico>
                </PropTab>
                <PropTab top={0} active>
                  <Ico>
                    <path d="M15 3.500l-3 3-2.500-1-1-2.500 3-2.500C8 .5 5.500 3 6 6L1 11c-1.500 2 1.500 5 3.500 3.500L10 10c3 .5 5.500-3 5-6.500z" fill="#74a0f0" />
                  </Ico>
                </PropTab>
                <PropTab top={0}>
                  <Ico>
                    <circle cx="3" cy="3" r="2.500" fill="#4a6db0" />
                    <circle cx="3" cy="13" r="1.500" fill="#4a6db0" />
                    <circle cx="14" cy="13" r="1.500" fill="#4a6db0" />
                    <circle cx="14" cy="3" r="1" fill="#4a6db0" />
                    <path d="M3 3v10M3 3l11 10M3 3h11" stroke="#4a6db0" />
                  </Ico>
                </PropTab>
                <PropTab top={0}>
                  <Ico>
                    <circle cx="7.500" cy="9" r="6" stroke="#4a6db0" strokeWidth="1.300" />
                    <circle cx="7.500" cy="9" r="2.500" fill="#4a6db0" />
                    <circle cx="13" cy="3" r="2" fill="#4a6db0" />
                  </Ico>
                </PropTab>
                <PropTab top={0}>
                  <Ico>
                    <path d="M1.500 10C2 5 7 2 12 1.500c2 0 3 1 2.500 3.500-1 5-4 9-8 9.500-3 .5-5-1.500-5-4z" stroke="#5a80c8" strokeWidth="1.400" />
                    <circle cx="7" cy="9" r="3" stroke="#5a80c8" strokeWidth="1.300" />
                  </Ico>
                </PropTab>
                <PropTab top={0}>
                  <Ico>
                    <path d="M3 3h10L8 13z" stroke="#14b88a" strokeWidth="1.200" />
                    <rect x="1" y="1" width="3.500" height="3.500" stroke="#14b88a" fill="#1d1d1d" />
                    <rect x="11.500" y="1" width="3.500" height="3.500" stroke="#14b88a" fill="#1d1d1d" />
                    <rect x="6.300" y="11.500" width="3.500" height="3.500" stroke="#14b88a" fill="#1d1d1d" />
                  </Ico>
                </PropTab>
                <PropTab top={0} sep>
                  <Ico>
                    <circle cx="8" cy="8" r="7" fill="#a84a58" />
                    <path d="M8 8h7a7 7 0 0 1-7 7zM8 8H1a7 7 0 0 1 7-7z" fill="#1d1d1d" />
                  </Ico>
                </PropTab>
                <PropTab top={8}>
                  <svg width="14" height="14" viewBox="0 0 14 14">
                    <rect width="14" height="14" fill="#a84a58" />
                    <path d="M0 2.800h2.800v2.800H0zM5.600 0h2.800v2.800H5.600zM11.200 2.800H14v2.800h-2.800zM2.800 5.600h2.800v2.800H2.800zM8.400 5.600h2.800v2.800H8.400zM0 8.400h2.800v2.800H0zM5.600 8.400h2.800v2.800H5.600zM11.200 8.400H14v2.800h-2.800zM2.800 11.200h2.800V14H2.800zM8.400 11.200h2.800V14H8.400z" fill="#1d1d1d" />
                  </svg>
                </PropTab>
              </div>
              <div className="flex-1 pl-[8px] pr-[9px]">
                <div className="h-[36px] flex items-center">
                  <span className="ml-[2px]">
                    <Ico>
                      <rect x="4" y="4" width="8" height="8" fill="#f0f0f0" />
                      <path d="M1 4V1h3M12 1h3v3M15 12v3h-3M4 15H1v-3" stroke="#bdbdbd" />
                    </Ico>
                  </span>
                  <span className="ml-[8px] mr-auto text-[#d8d8d8]">Plane</span>
                  <span className="mr-[1px]"><PinIco /></span>
                </div>
                <div className="mt-[8px] h-[19px] pl-[17px] rounded-[4px] bg-[#545454] relative flex items-center justify-center shadow-[0_1px_1px_#222] text-[#e0e0e0]">
                  <span className="absolute left-[7px]">
                    <Ico s={11}>
                      <path d="M8 1v14M1 8h14" stroke="#e0e0e0" strokeWidth="1.300" />
                    </Ico>
                  </span>
                  Add Modifier
                </div>
              </div>
            </div>
          </div>
        </div>
      </div>

      {/* status bar */}
      <div className="h-[23px] shrink-0 flex items-center text-[#a6a6a6] pl-[10px] pr-[8px]">
        <Ico s={14}>
          <path d="M3 5V4a3 3 0 0 1 3-3v6H3zM3 7v5a3 3 0 0 0 3 3h4a3 3 0 0 0 3-3V4a3 3 0 0 0-3-3H9" stroke="#9c9c9c" fill="none" />
          <path d="M3 7V4a3 3 0 0 1 3-3h1v6z" fill="#8a8a8a" />
        </Ico>
        <span className="ml-[2px]">Select</span>
        <span className="ml-[9px]">
          <Ico s={14}>
            <rect x="3" y="1" width="10" height="14" rx="3" stroke="#9c9c9c" />
            <rect x="6" y="3" width="4" height="6" fill="#9c9c9c" />
          </Ico>
        </span>
        <span className="ml-[3px]">Rotate View</span>
        <span className="ml-[10px]">
          <Ico s={14}>
            <path d="M3 7V4a3 3 0 0 1 3-3h4M3 7v5a3 3 0 0 0 3 3h4a3 3 0 0 0 3-3V7" stroke="#9c9c9c" fill="none" />
            <path d="M13 7V4a3 3 0 0 0-3-3H9v6z" fill="#8a8a8a" />
          </Ico>
        </span>
        <span className="ml-[3px]">Call Menu</span>
        <div className="ml-auto flex items-center">
          <Ico s={15}>
            <circle cx="8" cy="8" r="6" stroke="#888" />
            <ellipse cx="8" cy="8" rx="3" ry="6" stroke="#888" />
            <path d="M2 8h12M2 2l12 12" stroke="#888" />
          </Ico>
          <span className="ml-[7px] w-px h-[13px] bg-[#777]" />
          <span className="ml-[5px] tracking-[.5px]">4.3.2</span>
        </div>
      </div>
    </div>
  );
}
